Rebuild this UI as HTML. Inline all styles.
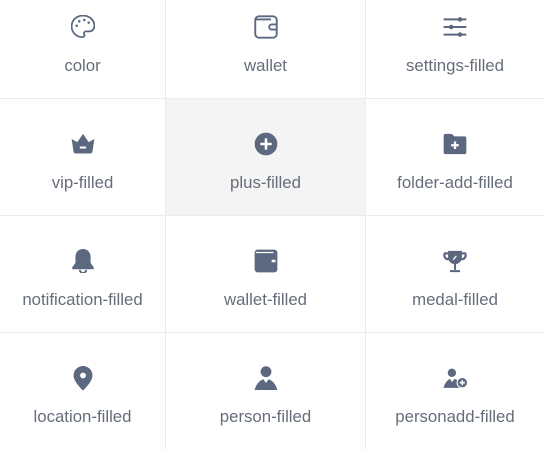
<!DOCTYPE html>
<html><head><style>
html,body{margin:0;padding:0;width:544px;height:448px;overflow:hidden;background:#fff;font-family:"Liberation Sans",sans-serif}
.g{position:absolute;top:-18px;left:0;width:544px}
.c{position:absolute;height:117px;box-sizing:border-box;border-right:1px solid #ececec;border-bottom:1px solid #ececec}
.c svg{position:absolute;left:50%;top:33px;margin-left:-12px;width:24px;height:24px}
.c span{position:absolute;left:0;right:0;top:74px;text-align:center;font-size:16.8px;color:#666d7a;white-space:nowrap}
</style></head><body>
<div class="g">
<div class="c" style="left:0;top:0;width:166px"><svg viewBox="3.5 3.5 19 19" fill="none" stroke="#5b6880" stroke-width="1.4"><path d="M13 4C7.5 4 4 8 4 12.5 4 17.5 8 21 12.5 21c1.5 0 2-1 1.5-2-.6-1.2 0-2.5 1.5-2.5h2.5C20 16.5 22 15 22 12 22 7.5 18 4 13 4z"/><g fill="#5b6880" stroke="none"><circle cx="8" cy="12" r="1"/><circle cx="10" cy="8.5" r="1"/><circle cx="14" cy="7.5" r="1"/><circle cx="17.5" cy="9.5" r="1"/></g></svg><span>color</span></div>
<div class="c" style="left:166px;top:0;width:200px"><svg viewBox="3.5 3.5 19 19" fill="none" stroke="#5b6880" stroke-width="1.5"><rect x="4.5" y="4.5" width="17" height="17" rx="3"/><path d="M5 7h12"/><path d="M21.5 11h-4a2 2 0 0 0 0 4h4"/></svg><span>wallet</span></div>
<div class="c" style="left:366px;top:0;width:178px;border-right:none"><svg viewBox="3.5 3.5 19 19" fill="#5b6880" stroke="#5b6880" stroke-width="1.6"><path d="M4 7h18M4 13h18M4 19h18"/><circle cx="17" cy="7" r="1.8" stroke="none"/><circle cx="10" cy="13" r="1.8" stroke="none"/><circle cx="17" cy="19" r="1.8" stroke="none"/></svg><span>settings-filled</span></div>
<div class="c" style="left:0;top:117px;width:166px"><svg viewBox="3.5 3.5 19 19"><path fill="#5b6880" d="M4 9l4.5 2.5L13 5l4.5 6.5L22 9l-1.5 10a2 2 0 0 1-2 1.5h-11a2 2 0 0 1-2-1.5z"/><rect x="10.5" y="15" width="5" height="1.6" fill="#fff"/></svg><span>vip-filled</span></div>
<div class="c" style="left:166px;top:117px;width:200px;background:#f4f4f4"><svg viewBox="3.5 3.5 19 19"><circle cx="13" cy="13" r="9" fill="#5b6880"/><path d="M13 8.5v9M8.5 13h9" stroke="#fff" stroke-width="2"/></svg><span>plus-filled</span></div>
<div class="c" style="left:366px;top:117px;width:178px;border-right:none"><svg viewBox="3.5 3.5 19 19"><path fill="#5b6880" d="M4 6.5A1.5 1.5 0 0 1 5.5 5h5l2 2h8A1.5 1.5 0 0 1 22 8.5v11a1.5 1.5 0 0 1-1.5 1.5h-15A1.5 1.5 0 0 1 4 19.5z"/><path d="M13 11v6M10 14h6" stroke="#fff" stroke-width="1.8"/></svg><span>folder-add-filled</span></div>
<div class="c" style="left:0;top:234px;width:166px"><svg viewBox="3.5 3.5 19 19"><path fill="#5b6880" d="M13 3.5c-4 0-6 3-6 6.5v4.5L4.5 18v1.5h17V18L19 14.5V10c0-3.5-2-6.5-6-6.5z"/><path d="M10.5 20a2.5 2.5 0 0 0 5 0" fill="none" stroke="#5b6880" stroke-width="1.5"/></svg><span>notification-filled</span></div>
<div class="c" style="left:166px;top:234px;width:200px"><svg viewBox="3.5 3.5 19 19"><rect x="4" y="4" width="18" height="18" rx="2.5" fill="#5b6880"/><path d="M5 6.3h14" stroke="#fff" stroke-width="1"/><rect x="17.5" y="12" width="3" height="2" fill="#fff"/></svg><span>wallet-filled</span></div>
<div class="c" style="left:366px;top:234px;width:178px;border-right:none"><svg viewBox="3.5 3.5 19 19"><path fill="#5b6880" d="M7.5 5h11v5a5.5 5.5 0 0 1-11 0z"/><path d="M7.5 7H5a3 3 0 0 0 3 4.5M18.5 7H21a3 3 0 0 1-3 4.5" fill="none" stroke="#5b6880" stroke-width="1.8"/><path d="M13 15v5M9 21h8" stroke="#5b6880" stroke-width="1.6"/><path d="M11.5 12l2.5-3" stroke="#fff" stroke-width="1"/></svg><span>medal-filled</span></div>
<div class="c" style="left:0;top:351px;width:166px;border-bottom:none"><svg viewBox="3.5 3.5 19 19"><path fill="#5b6880" d="M13 3.5a7.5 7.5 0 0 0-7.5 7.5c0 5 7.5 12 7.5 12s7.5-7 7.5-12A7.5 7.5 0 0 0 13 3.5z"/><circle cx="13" cy="11" r="2.3" fill="#fff"/></svg><span>location-filled</span></div>
<div class="c" style="left:166px;top:351px;width:200px;border-bottom:none"><svg viewBox="3.5 3.5 19 19"><circle cx="13" cy="8" r="4.3" fill="#5b6880"/><path fill="#5b6880" d="M4 22.5c1.3-5 4.5-8 7-8.5L13 17l2-3c2.5.5 5.7 3.5 7 8.5z"/></svg><span>person-filled</span></div>
<div class="c" style="left:366px;top:351px;width:178px;border-right:none;border-bottom:none"><svg viewBox="1.5 3.5 23 19"><circle cx="10" cy="8" r="4" fill="#5b6880"/><path fill="#5b6880" d="M2 22.5c1.3-5 4-8 6.5-8.5L10 17l2.5-3c2 .3 4 1.5 5.5 3.5v5z"/><circle cx="20" cy="17.5" r="5" fill="#5b6880" stroke="#fff" stroke-width="1"/><path d="M20 15v5M17.5 17.5h5" stroke="#fff" stroke-width="1.5"/></svg><span>personadd-filled</span></div>
</div>
</body></html>
